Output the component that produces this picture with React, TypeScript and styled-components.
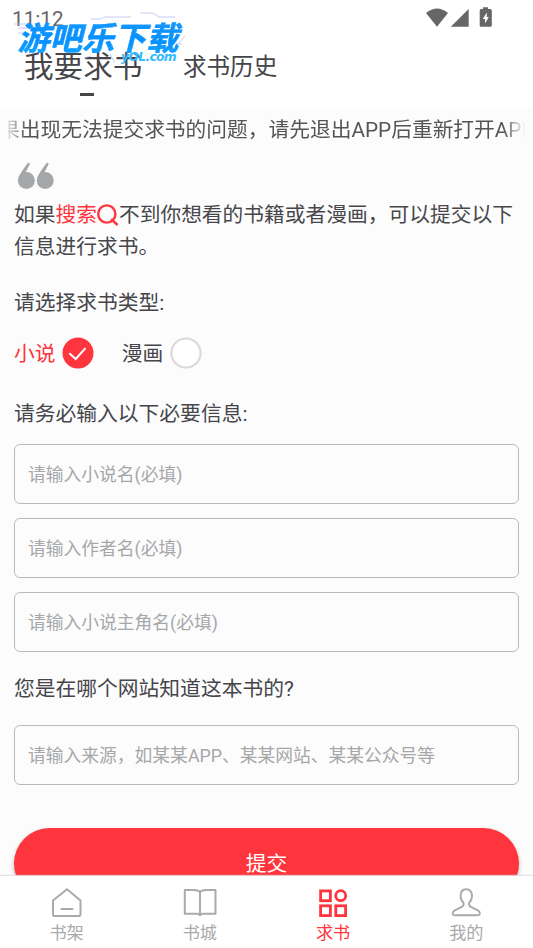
import React, { useState } from 'react';
import styled, { createGlobalStyle } from 'styled-components';

const RED = '#ff353e';
const INK = '#45454a';
const GREY = '#a9aaab';

const GlobalStyle = createGlobalStyle`
  * { box-sizing: border-box; }
  html, body { margin: 0; padding: 0; overflow: hidden; }
  body {
    font-family: Roboto, "Noto Sans CJK SC", sans-serif;
    color: ${INK};
    background: #fff;
  }
`;

const Screen = styled.div`
  width: 533px;
  height: 948px;
  display: flex;
  flex-direction: column;
  overflow: hidden;
  background: #fcfcfd;
`;

const Header = styled.header`
  position: relative;
  flex: none;
  height: 108px;
  background: #fff;
`;

const StatusBar = styled.div`
  height: 37px;
  display: flex;
  justify-content: space-between;
  padding: 0 41px 0 12px;
  color: #666;
`;

const Clock = styled.time`
  font-size: 20.7px;
  line-height: 38px;
`;

const StatusIcons = styled.svg`
  width: 66px;
  height: 22px;
  margin-top: 6px;
  fill: #666;
`;

const TopTabs = styled.nav`
  display: flex;
  padding-left: 24px;
  gap: 40.5px;
`;

const TopTab = styled.button<{ $active?: boolean }>`
  display: flex;
  flex-direction: column;
  align-items: center;
  height: 62px;
  padding: 0;
  border: 0;
  background: none;
  font: inherit;
  font-size: ${(p) => (p.$active ? '29.6px' : '23.6px')};
  line-height: ${(p) => (p.$active ? '60px' : '61px')};
  color: ${INK};
  white-space: nowrap;
  &::after {
    content: '';
    flex: none;
    width: 14px;
    height: 3px;
    margin-top: -4px;
    margin-left: 8px;
    background: ${(p) => (p.$active ? INK : 'transparent')};
  }
`;

const Watermark = styled.div`
  position: absolute;
  left: 14px;
  top: 10px;
  width: 176px;
  height: 58px;
  pointer-events: none;
`;

const WatermarkLines = styled.svg`
  position: absolute;
  inset: 0;
  width: 176px;
  height: 58px;
  fill: none;
  stroke: #b9bdf2;
  stroke-width: 0.8;
`;

const WatermarkName = styled.span`
  position: absolute;
  left: 7px;
  top: 3px;
  font: 700 32.2px/46px "Noto Sans CJK SC", sans-serif;
  transform: skewX(-14deg);
  white-space: nowrap;
  background: linear-gradient(#1698ff 15%, #058fff 60%, #12a6ff 90%);
  background-clip: text;
  -webkit-text-fill-color: transparent;
  -webkit-text-stroke: 0.4px #0a95ff;
`;

const WatermarkSite = styled.span`
  position: absolute;
  left: 107px;
  top: 39px;
  font: italic 700 12.4px/16px "DejaVu Sans", sans-serif;
  letter-spacing: -0.7px;
  color: #35bbfd;
`;

const Content = styled.main`
  flex: 1;
  min-height: 0;
  overflow: hidden;
  font-size: 20.74px;
`;

const Notice = styled.div`
  height: 45px;
  margin: 0 8px;
  display: flex;
  overflow: hidden;
  line-height: 45px;
  color: #555;
  white-space: nowrap;
  mask-image: linear-gradient(90deg, rgba(0, 0, 0, 0.15), #000 18px, #000 calc(100% - 22px), transparent);
`;

const NoticeText = styled.span`
  flex: none;
  margin-left: -9px;
`;

const Form = styled.form`
  padding: 0 14px;
  display: flex;
  flex-direction: column;
`;

const QuoteMark = styled.svg`
  width: 38px;
  height: 29px;
  margin: 8px 0 9px 3px;
  fill: #a5a7a9;
`;

const Intro = styled.p`
  margin: 0;
  line-height: 32px;
  white-space: nowrap;
  color: #47474a;
`;

const SearchLink = styled.a`
  color: ${RED};
`;

const SearchIcon = styled.svg`
  width: 22px;
  height: 22px;
  vertical-align: -4px;
  fill: none;
  stroke: ${RED};
  stroke-width: 2.4;
`;

const Label = styled.h2<{ $before: number; $after: number }>`
  margin: ${(p) => p.$before}px 0 ${(p) => p.$after}px 0;
  font-size: 20.78px;
  font-weight: 400;
  line-height: 30px;
`;

const Options = styled.div`
  display: flex;
  gap: 27.5px;
  height: 32px;
`;

const Option = styled.button<{ $on: boolean }>`
  display: flex;
  align-items: center;
  gap: 6.8px;
  padding: 0;
  border: 0;
  background: none;
  font: inherit;
  line-height: 32px;
  color: ${(p) => (p.$on ? RED : INK)};
`;

const Radio = styled.svg`
  width: 32px;
  height: 32px;
  margin-bottom: 2px;
  fill: none;
`;

const Fields = styled.div`
  display: grid;
  gap: 14px;
`;

const Field = styled.input`
  width: 100%;
  height: 60px;
  padding: 1px 14px 0 13px;
  border: 1px solid #b9babc;
  border-radius: 6px;
  background: transparent;
  font: inherit;
  font-size: 17.78px;
  color: ${INK};
  outline: none;
  &::placeholder { color: #a6a7a8; opacity: 1; }
`;

const Submit = styled.button`
  height: 71px;
  margin-top: 43px;
  border: 0;
  border-radius: 36px;
  background: ${RED};
  color: #fff;
  font: inherit;
  line-height: 71px;
  padding: 1px 0 0;
  box-shadow: 0 2px 4px rgba(0, 0, 0, 0.28);
`;

const BottomBar = styled.nav`
  position: relative;
  flex: none;
  height: 72px;
  display: grid;
  grid-template-columns: repeat(4, 1fr);
  background: #fff;
  box-shadow: 0 -1px 1px rgba(225, 225, 225, 0.85);
`;

const BottomItem = styled.button<{ $active?: boolean }>`
  display: flex;
  flex-direction: column;
  align-items: center;
  padding: 10px 0 0;
  border: 0;
  background: none;
  font: inherit;
  font-size: 17.2px;
  line-height: 26px;
  color: ${(p) => (p.$active ? RED : GREY)};
`;

const BottomIcon = styled.svg`
  flex: none;
  width: 36px;
  height: 34px;
  fill: none;
  stroke: currentColor;
  stroke-width: 2;
  stroke-linejoin: round;
  stroke-linecap: round;
`;

const kinds = ['小说', '漫画'];

const bottomItems = [
  {
    name: '书架',
    icon: (
      <path d="M18 3.2 31.5 14.5V28.2Q31.5 30 29.7 30H5.8Q4 30 4 28.2V14.5ZM12.5 23H23.5" />
    ),
  },
  {
    name: '书城',
    icon: (
      <path d="M18 5.7Q15.5 4 12 4H2.8V27.8H15.5L18 29.2 20.5 27.8H33.5V4H24Q20.5 4 18 5.7V28" />
    ),
  },
  {
    name: '求书',
    icon: (
      <g strokeWidth="2.8" strokeLinejoin="miter">
        <rect x="5.6" y="4.9" width="9.8" height="9.8" />
        <circle cx="25.7" cy="9.7" r="5" />
        <rect x="5.6" y="19.8" width="9.8" height="9.8" />
        <rect x="20.8" y="19.8" width="9.8" height="9.8" />
      </g>
    ),
  },
  {
    name: '我的',
    icon: (
      <path
        strokeWidth="1.9"
        d="M18.3 3.3C14.6 3.3 12.6 6 12.6 9.8 12.6 13 13.6 15.3 15.5 16.8 16 19 15.4 20 13.8 20.8L6.8 24.3Q4.7 25.6 4.7 27.8 4.8 29.2 6.5 29.2H30.1Q31.8 29.2 31.9 27.8 31.9 25.6 29.8 24.3L22.8 20.8C21.2 20 20.6 19 21.1 16.8 23 15.3 24 13 24 9.8 24 6 22 3.3 18.3 3.3Z"
      />
    ),
  },
];

export default function App() {
  const [kind, setKind] = useState('小说');

  return (
    <>
      <GlobalStyle />
      <Screen>
        <Header>
          <StatusBar>
            <Clock>11:12</Clock>
            <StatusIcons viewBox="0 0 66 22">
              <path d="M0 7Q11-2 22 7L11 20.7Z" />
              <path d="M42.7 3V20.8H24.8Z" />
              <path
                fillRule="evenodd"
                d="M57 1.2H62V3H64.3Q65.8 3 65.8 4.5V19.3Q65.8 20.8 64.3 20.8H55Q53.7 20.8 53.7 19.3V4.5Q53.7 3 55 3H57ZM60.8 6.5 56.8 13H59V17.5L62.8 11H60.8Z"
              />
            </StatusIcons>
          </StatusBar>
          <TopTabs>
            <TopTab $active>我要求书</TopTab>
            <TopTab>求书历史</TopTab>
          </TopTabs>
          <Watermark>
            <WatermarkLines viewBox="0 0 176 58">
              <path d="M0 14H14M4 18H24M77 9H86L91 7H117M126 3H139L145 7H161M4 23H12M158 41 171 26M162 34H168M96 44 101 53M70 48 77 46" />
            </WatermarkLines>
            <WatermarkName>游吧乐下载</WatermarkName>
            <WatermarkSite>yOL.com</WatermarkSite>
          </Watermark>
        </Header>

        <Content>
          <Notice>
            <NoticeText>果出现无法提交求书的问题，请先退出APP后重新打开APP</NoticeText>
          </Notice>
          <Form onSubmit={(e) => e.preventDefault()}>
            <QuoteMark viewBox="0 0 38 29">
              <circle cx="9.4" cy="19.5" r="8.5" />
              <circle cx="28.2" cy="19.5" r="8.5" />
              <path d="M1.2 17.5Q3 12 11.2 1.5L13 2.7 8.2 12.2ZM20 17.5Q21.8 12 30 1.5L31.8 2.7 27 12.2Z" />
            </QuoteMark>
            <Intro>
              如果
              <SearchLink>
                搜索
                <SearchIcon viewBox="0 0 22 22">
                  <circle cx="9.8" cy="10" r="8.6" />
                  <path d="M14.2 15.2 20.6 21" />
                </SearchIcon>
              </SearchLink>
              不到你想看的书籍或者漫画，可以提交以下
              <br />
              信息进行求书。
            </Intro>

            <Label $before={25} $after={20}>请选择求书类型:</Label>
            <Options>
              {kinds.map((k) => (
                <Option key={k} type="button" $on={k === kind} onClick={() => setKind(k)}>
                  {k}
                  <Radio viewBox="0 0 32 32">
                    {k === kind ? (
                      <>
                        <circle cx="16" cy="16" r="15.5" fill={RED} />
                        <path d="M7.3 16.2 13.7 22 23.5 11.2" stroke="#fff" strokeWidth="2" />
                      </>
                    ) : (
                      <circle cx="16" cy="16" r="14.6" fill="#fff" stroke="#d9d9d9" strokeWidth="2" />
                    )}
                  </Radio>
                </Option>
              ))}
            </Options>

            <Label $before={29} $after={15}>请务必输入以下必要信息:</Label>
            <Fields>
              <Field placeholder="请输入小说名(必填)" />
              <Field placeholder="请输入作者名(必填)" />
              <Field placeholder="请输入小说主角名(必填)" />
            </Fields>

            <Label $before={22} $after={21}>您是在哪个网站知道这本书的?</Label>
            <Field placeholder="请输入来源，如某某APP、某某网站、某某公众号等" />
            <Submit>提交</Submit>
          </Form>
        </Content>

        <BottomBar>
          {bottomItems.map(({ name, icon }) => (
            <BottomItem key={name} $active={name === '求书'}>
              <BottomIcon viewBox="0 0 36 34">{icon}</BottomIcon>
              {name}
            </BottomItem>
          ))}
        </BottomBar>
      </Screen>
    </>
  );
}
